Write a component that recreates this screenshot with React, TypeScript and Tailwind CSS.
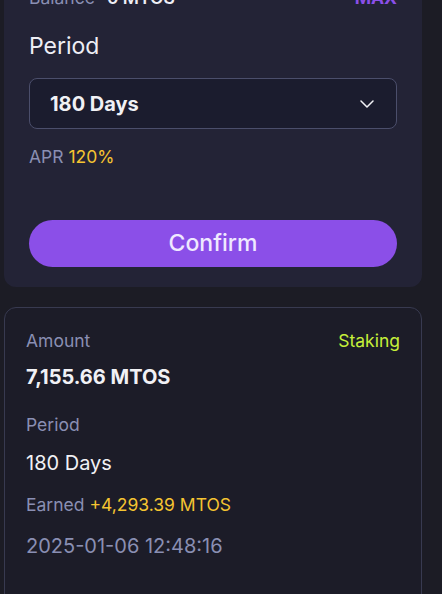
import React from 'react'

const font = { fontFamily: 'Inter, "Noto Sans", sans-serif' }

const ChevronDown = () => (
  <svg width="14" height="8" viewBox="0 0 14 8" fill="none">
    <path d="M1 1l6 6 6-6" stroke="#f1f1f5" strokeWidth="1.5" strokeLinecap="round" strokeLinejoin="round" />
  </svg>
)

const StakeForm = () => (
  <div className="rounded-b-xl bg-[#232336] px-[25px] pb-5">
    <div className="flex items-center justify-between text-[17.5px] leading-6">
      <div className="flex gap-3">
        <span className="text-[#8a8fb3]">Balance</span>
        <span className="font-semibold text-[#eeeef5]">0 MTOS</span>
      </div>
      <span className="font-bold text-[#8b4fe8]">MAX</span>
    </div>

    <div className="mt-5 text-[23px] leading-8 text-[#eeeef5]">Period</div>

    <button className="mt-4 flex h-[51px] w-full items-center justify-between rounded-lg border border-[#4b4e6b] bg-[#1b1c2e] pl-5 pr-[22px]">
      <span className="text-[20px] font-bold text-[#f1f1f5]">180 Days</span>
      <ChevronDown />
    </button>

    <div className="mt-4 text-[17.5px] leading-6">
      <span className="text-[#8a8fb3]">APR </span>
      <span className="text-[#f5c431]">120%</span>
    </div>

    <button className="mt-[51px] h-[47px] w-full rounded-full bg-[#8b4fe8] text-[23px] font-medium text-[#efe9ff]">
      Confirm
    </button>
  </div>
)

const StakeRecord = () => (
  <div className="mt-5 rounded-xl border border-[#383a50] bg-[#1c1c28] px-[21px] pt-[21px] pb-[60px]">
    <div className="flex items-center justify-between text-[17.5px] leading-6">
      <span className="text-[#8a8fb3]">Amount</span>
      <span className="text-[#c6f03a]">Staking</span>
    </div>
    <div className="mt-[10px] text-[20px] leading-7 font-bold text-[#f1f1f5]">7,155.66 MTOS</div>

    <div className="mt-[22px] text-[17.5px] leading-6 text-[#8a8fb3]">Period</div>
    <div className="mt-3 text-[20px] leading-7 text-[#f1f1f5]">180 Days</div>

    <div className="mt-4 text-[17.5px] leading-6">
      <span className="text-[#8a8fb3]">Earned </span>
      <span className="text-[#f5c431]">+4,293.39 MTOS</span>
    </div>
    <div className="mt-[15px] text-[20px] leading-7 text-[#8a8fb3]">2025-01-06 12:48:16</div>
  </div>
)

const App = () => {
  return (
    <div className="h-[594px] overflow-hidden bg-[#1c1c25]" style={font}>
      <div className="-mt-[14px] w-[418px] pl-1 box-content">
        <StakeForm />
        <StakeRecord />
      </div>
    </div>
  )
}

export default App
